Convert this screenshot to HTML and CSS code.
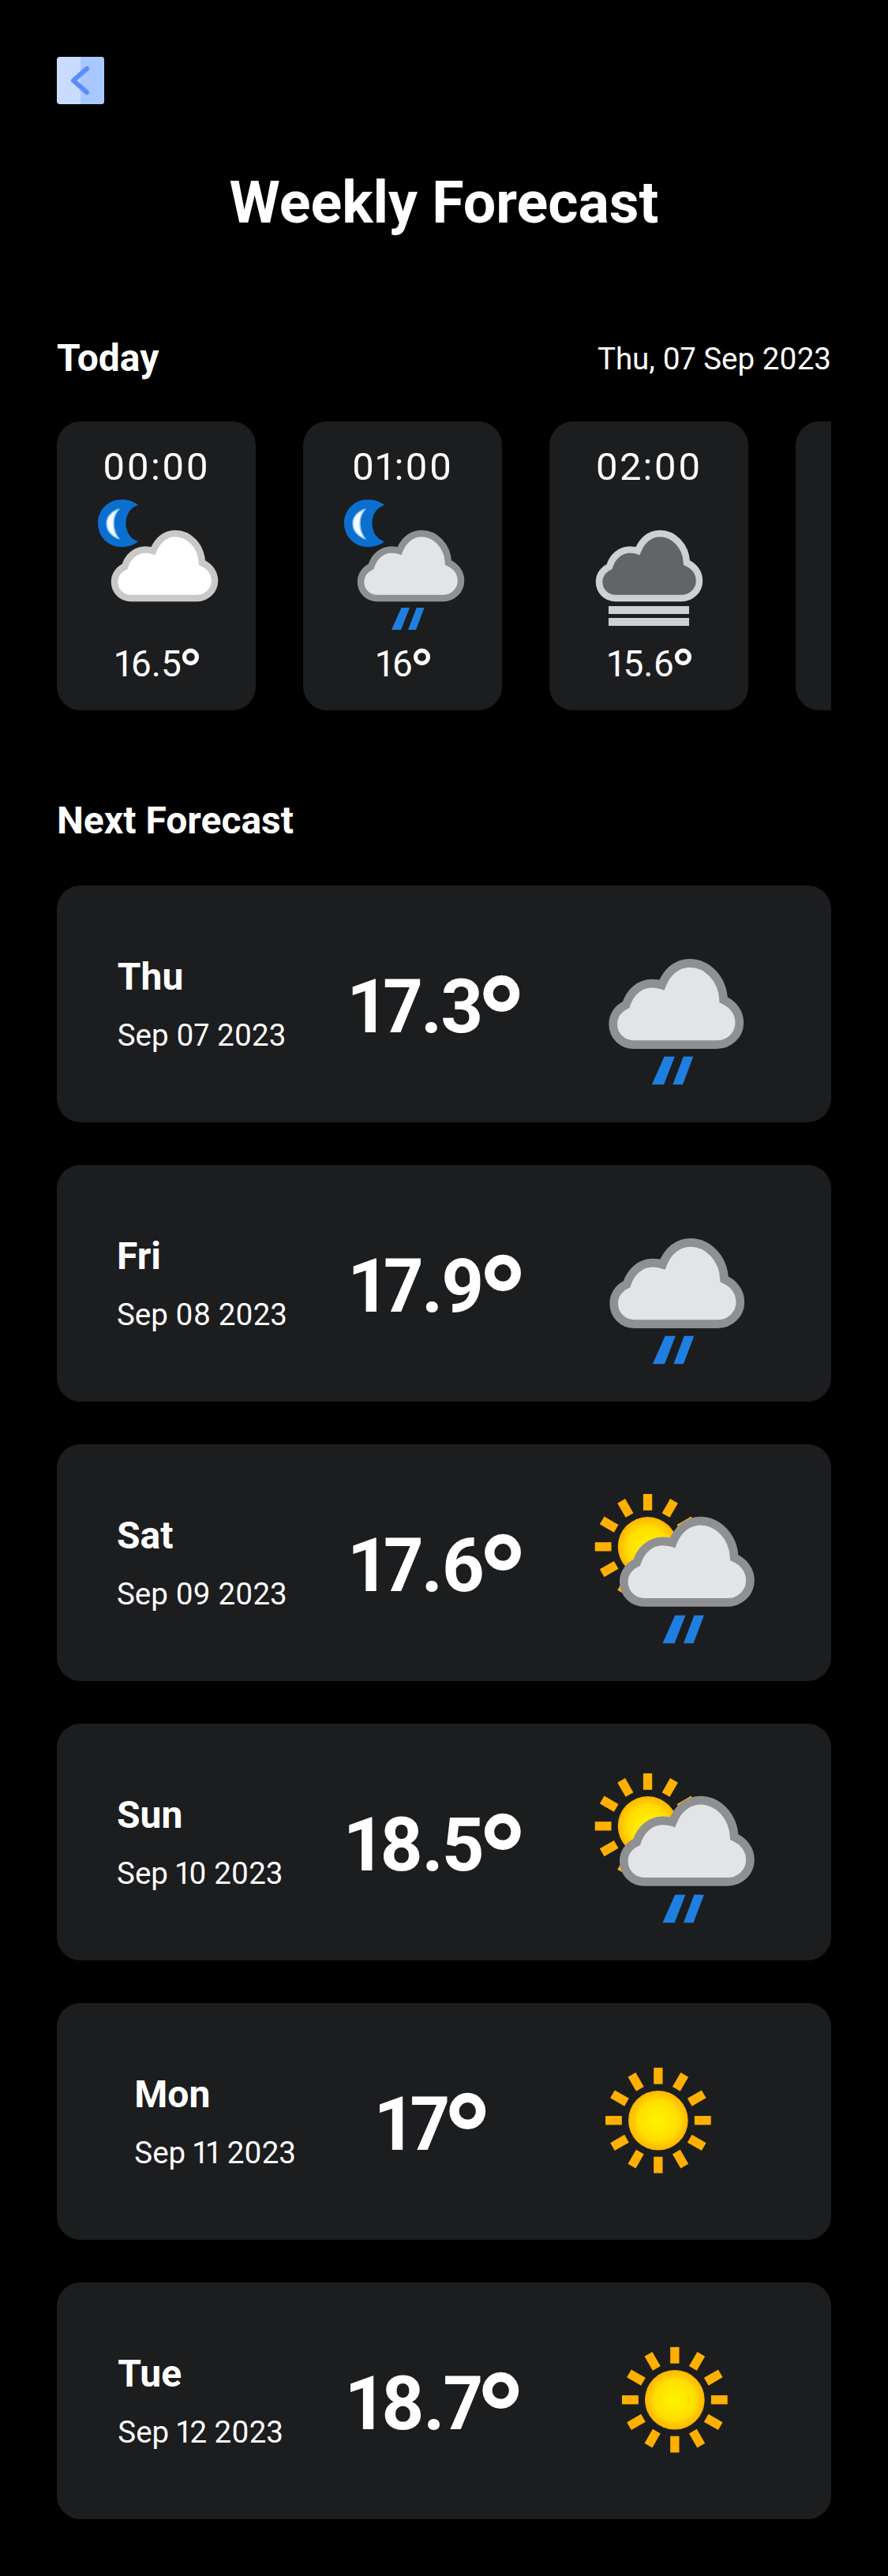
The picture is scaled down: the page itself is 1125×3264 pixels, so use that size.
FILE: index.html
```html
<!DOCTYPE html>
<html>
<head>
    <title>Weekly Forecast</title>
    <link rel="stylesheet" href="styles.css">
</head>
<body>
    <!-- shared weather icons -->
    <svg class="icon-defs" aria-hidden="true">
        <defs>
            <radialGradient id="sunFill">
                <stop offset="0" stop-color="#fff200"/>
                <stop offset="0.65" stop-color="#ffe000"/>
                <stop offset="1" stop-color="#ffb400"/>
            </radialGradient>
            <path id="cloudShape" stroke-width="8.5" d="M25 86 H108 C121 86 131 76 131 64 C131 53 124 45 115 41 C114 19 98 4 81 4 C68 4 58 13 53 26 C50 25 47 24.5 43 24.5 C31 24.5 21 33 17 46 C10 49 4 56 4 65 C4 77 13 86 25 86 Z"/>
            <g id="moon">
                <path fill="#0b6fd0" d="M67 15 C60 9 52 8 46 8 C29 8 16 21 16 38 C16 55 29 68 46 68 C52 68 60 67 67 61 C57 58 51.5 49 51.5 38 C51.5 27 57 18 67 15 Z"/>
                <path fill="#f4fbff" stroke="#8cc6f2" stroke-width="1.5" d="M43 20 C33 23 27 30 27 38 C27 47 33 54 43 58 C38 52 36 45 36 38 C36 31 38 25 43 20 Z"/>
            </g>
            <g id="rainDrops" fill="#1f7fe0">
                <path d="M88.5 145 H99 L88 173 H76 Z"/>
                <path d="M107.7 145 H117.6 L107 173 H97 Z"/>
            </g>
            <g id="sunRays" stroke="#ffb000" stroke-width="9">
                <path d="M0 -36.5 V-53"/>
                <path d="M0 -36.5 V-53" transform="rotate(30)"/>
                <path d="M0 -36.5 V-53" transform="rotate(60)"/>
                <path d="M0 -36.5 V-53" transform="rotate(90)"/>
                <path d="M0 -36.5 V-53" transform="rotate(120)"/>
                <path d="M0 -36.5 V-53" transform="rotate(150)"/>
                <path d="M0 -36.5 V-53" transform="rotate(180)"/>
                <path d="M0 -36.5 V-53" transform="rotate(210)"/>
                <path d="M0 -36.5 V-53" transform="rotate(240)"/>
                <path d="M0 -36.5 V-53" transform="rotate(270)"/>
                <path d="M0 -36.5 V-53" transform="rotate(300)"/>
                <path d="M0 -36.5 V-53" transform="rotate(330)"/>
            </g>
            <symbol id="nightClear" viewBox="0 0 180 184">
                <use href="#moon"/>
                <use href="#cloudShape" x="33" y="47" class="cloud-white"/>
            </symbol>
            <symbol id="nightRain" viewBox="0 0 180 184">
                <use href="#moon"/>
                <use href="#cloudShape" x="33" y="47" class="cloud-grey"/>
                <use href="#rainDrops"/>
            </symbol>
            <symbol id="fog" viewBox="0 0 180 184">
                <use href="#cloudShape" x="23" y="47" class="cloud-dark"/>
                <rect x="39" y="143" width="102" height="10" fill="#cfd0d1"/>
                <rect x="39" y="158" width="102" height="10" fill="#cfd0d1"/>
            </symbol>
            <symbol id="rain" viewBox="0 0 180 184">
                <use href="#cloudShape" x="33" y="47" class="cloud-grey"/>
                <use href="#rainDrops"/>
            </symbol>
            <symbol id="sunRain" viewBox="0 0 180 184">
                <use href="#sunRays" x="71" y="76"/>
                <circle cx="71" cy="76" r="30" fill="url(#sunFill)"/>
                <use href="#cloudShape" x="43" y="46" class="cloud-grey"/>
                <use href="#rainDrops" x="10"/>
            </symbol>
            <symbol id="sun" viewBox="0 0 180 184">
                <use href="#sunRays" x="99" y="91"/>
                <circle cx="99" cy="91" r="30" fill="url(#sunFill)"/>
            </symbol>
        </defs>
    </svg>

    <div class="container">
        <button class="back-btn" aria-label="Back">
            <svg width="60" height="60" viewBox="0 0 60 60">
                <rect width="60" height="60" rx="4" fill="#c9dcff"/>
                <path d="M30 0 H56 A4 4 0 0 1 60 4 V56 A4 4 0 0 1 56 60 H30 Z" fill="#a8c8ff"/>
                <path d="M38 15 L21 30 L38 45" fill="none" stroke="#5a8dff" stroke-width="6" stroke-linecap="round" stroke-linejoin="round"/>
            </svg>
        </button>

        <h1>Weekly Forecast</h1>

        <div class="today-head">
            <h2>Today</h2>
            <span class="today-date">Thu, 07 Sep 2023</span>
        </div>

        <div class="hours">
            <div class="hour-card">
                <div class="hour-time">00:00</div>
                <svg class="hour-icon"><use href="#nightClear"/></svg>
                <div class="hour-temp">16.5<span class="deg">°</span></div>
            </div>
            <div class="hour-card">
                <div class="hour-time">01:00</div>
                <svg class="hour-icon"><use href="#nightRain"/></svg>
                <div class="hour-temp">16<span class="deg">°</span></div>
            </div>
            <div class="hour-card">
                <div class="hour-time">02:00</div>
                <svg class="hour-icon"><use href="#fog"/></svg>
                <div class="hour-temp">15.6<span class="deg">°</span></div>
            </div>
            <div class="hour-card"></div>
        </div>

        <h2 class="next-title">Next Forecast</h2>

        <div class="days">
            <div class="day-card">
                <div class="day-info">
                    <div class="day-name">Thu</div>
                    <div class="day-date">Sep 07 2023</div>
                </div>
                <div class="day-temp">17.3<span class="deg">°</span></div>
                <div class="day-icon"><svg><use href="#rain"/></svg></div>
            </div>
            <div class="day-card">
                <div class="day-info">
                    <div class="day-name">Fri</div>
                    <div class="day-date">Sep 08 2023</div>
                </div>
                <div class="day-temp">17.9<span class="deg">°</span></div>
                <div class="day-icon"><svg><use href="#rain"/></svg></div>
            </div>
            <div class="day-card">
                <div class="day-info">
                    <div class="day-name">Sat</div>
                    <div class="day-date">Sep 09 2023</div>
                </div>
                <div class="day-temp">17.6<span class="deg">°</span></div>
                <div class="day-icon"><svg><use href="#sunRain"/></svg></div>
            </div>
            <div class="day-card">
                <div class="day-info">
                    <div class="day-name">Sun</div>
                    <div class="day-date">Sep 10 2023</div>
                </div>
                <div class="day-temp">18.5<span class="deg">°</span></div>
                <div class="day-icon"><svg><use href="#sunRain"/></svg></div>
            </div>
            <div class="day-card">
                <div class="day-info">
                    <div class="day-name">Mon</div>
                    <div class="day-date">Sep 11 2023</div>
                </div>
                <div class="day-temp">17<span class="deg">°</span></div>
                <div class="day-icon"><svg><use href="#sun"/></svg></div>
            </div>
            <div class="day-card">
                <div class="day-info">
                    <div class="day-name">Tue</div>
                    <div class="day-date">Sep 12 2023</div>
                </div>
                <div class="day-temp">18.7<span class="deg">°</span></div>
                <div class="day-icon"><svg><use href="#sun"/></svg></div>
            </div>
        </div>
    </div>
</body>
</html>
```

FILE: styles.css
```css
body {
    font-family: Roboto, "Open Sans", sans-serif;
    font-variant-numeric: proportional-nums;
    background-color: #000;
    color: #fff;
    margin: 0;
    padding: 0;
}

.icon-defs {
    position: absolute;
    width: 0;
    height: 0;
}

.container {
    width: 981px;
    padding: 72px;
}

.back-btn {
    display: block;
    width: 60px;
    height: 60px;
    padding: 0;
    border: none;
    background: none;
}

h1 {
    margin: 90px 0 0;
    height: 70px;
    line-height: 70px;
    font-size: 73.5px;
    font-weight: 700;
    text-align: center;
}

h2 {
    margin: 0;
    font-size: 48px;
    font-weight: 700;
    line-height: 56px;
}

.today-head {
    display: flex;
    justify-content: space-between;
    align-items: center;
    margin-top: 134px;
    height: 56px;
}

.today-date {
    font-size: 38.5px;
}

.hours {
    display: flex;
    gap: 60px;
    margin-top: 52px;
    padding-bottom: 12px;
    overflow: hidden;
}

.hour-card {
    flex: 0 0 252px;
    height: 366px;
    box-sizing: border-box;
    padding-top: 30px;
    background-color: #1c1d1f;
    border-radius: 30px;
    text-align: center;
}

.hour-time,
.hour-temp {
    font-size: 46px;
    line-height: 56px;
}

.hour-time {
    font-size: 49px;
    letter-spacing: 2px;
}

.hour-icon,
.day-icon svg {
    display: block;
    filter: blur(0.6px);
}

.hour-icon {
    width: 180px;
    height: 184px;
    margin: 5px auto 4px;
}

.next-title {
    margin-top: 100px;
}

.days {
    display: flex;
    flex-direction: column;
    gap: 54px;
    margin-top: 54px;
}

.day-card {
    display: flex;
    justify-content: space-evenly;
    align-items: center;
    height: 300px;
    padding-right: 6px;
    background-color: #1c1d1f;
    border-radius: 30px;
}

.day-info {
    padding: 2px 3px 0 0;
}

.day-name {
    font-size: 48px;
    font-weight: 700;
    line-height: 56px;
}

.day-date {
    margin-top: 22px;
    font-size: 38.5px;
    line-height: 48px;
}

.day-temp {
    padding-top: 8px;
    font-size: 94px;
    font-weight: 700;
    line-height: 110px;
    letter-spacing: -2px;
}

.day-icon {
    flex: 0 0 240px;
}

.day-icon svg {
    width: 227px;
    height: 232px;
}

.deg {
    margin: 0 -0.08em 0 -0.05em;
    font-size: 1.85em;
    line-height: 0;
    vertical-align: -0.31em;
}

.cloud-white {
    fill: #fff;
    stroke: #c9c9c9;
}

.cloud-grey {
    fill: #e3e4e6;
    stroke: #8f9092;
}

.cloud-dark {
    fill: #636466;
    stroke: #cfd0d1;
}
```
